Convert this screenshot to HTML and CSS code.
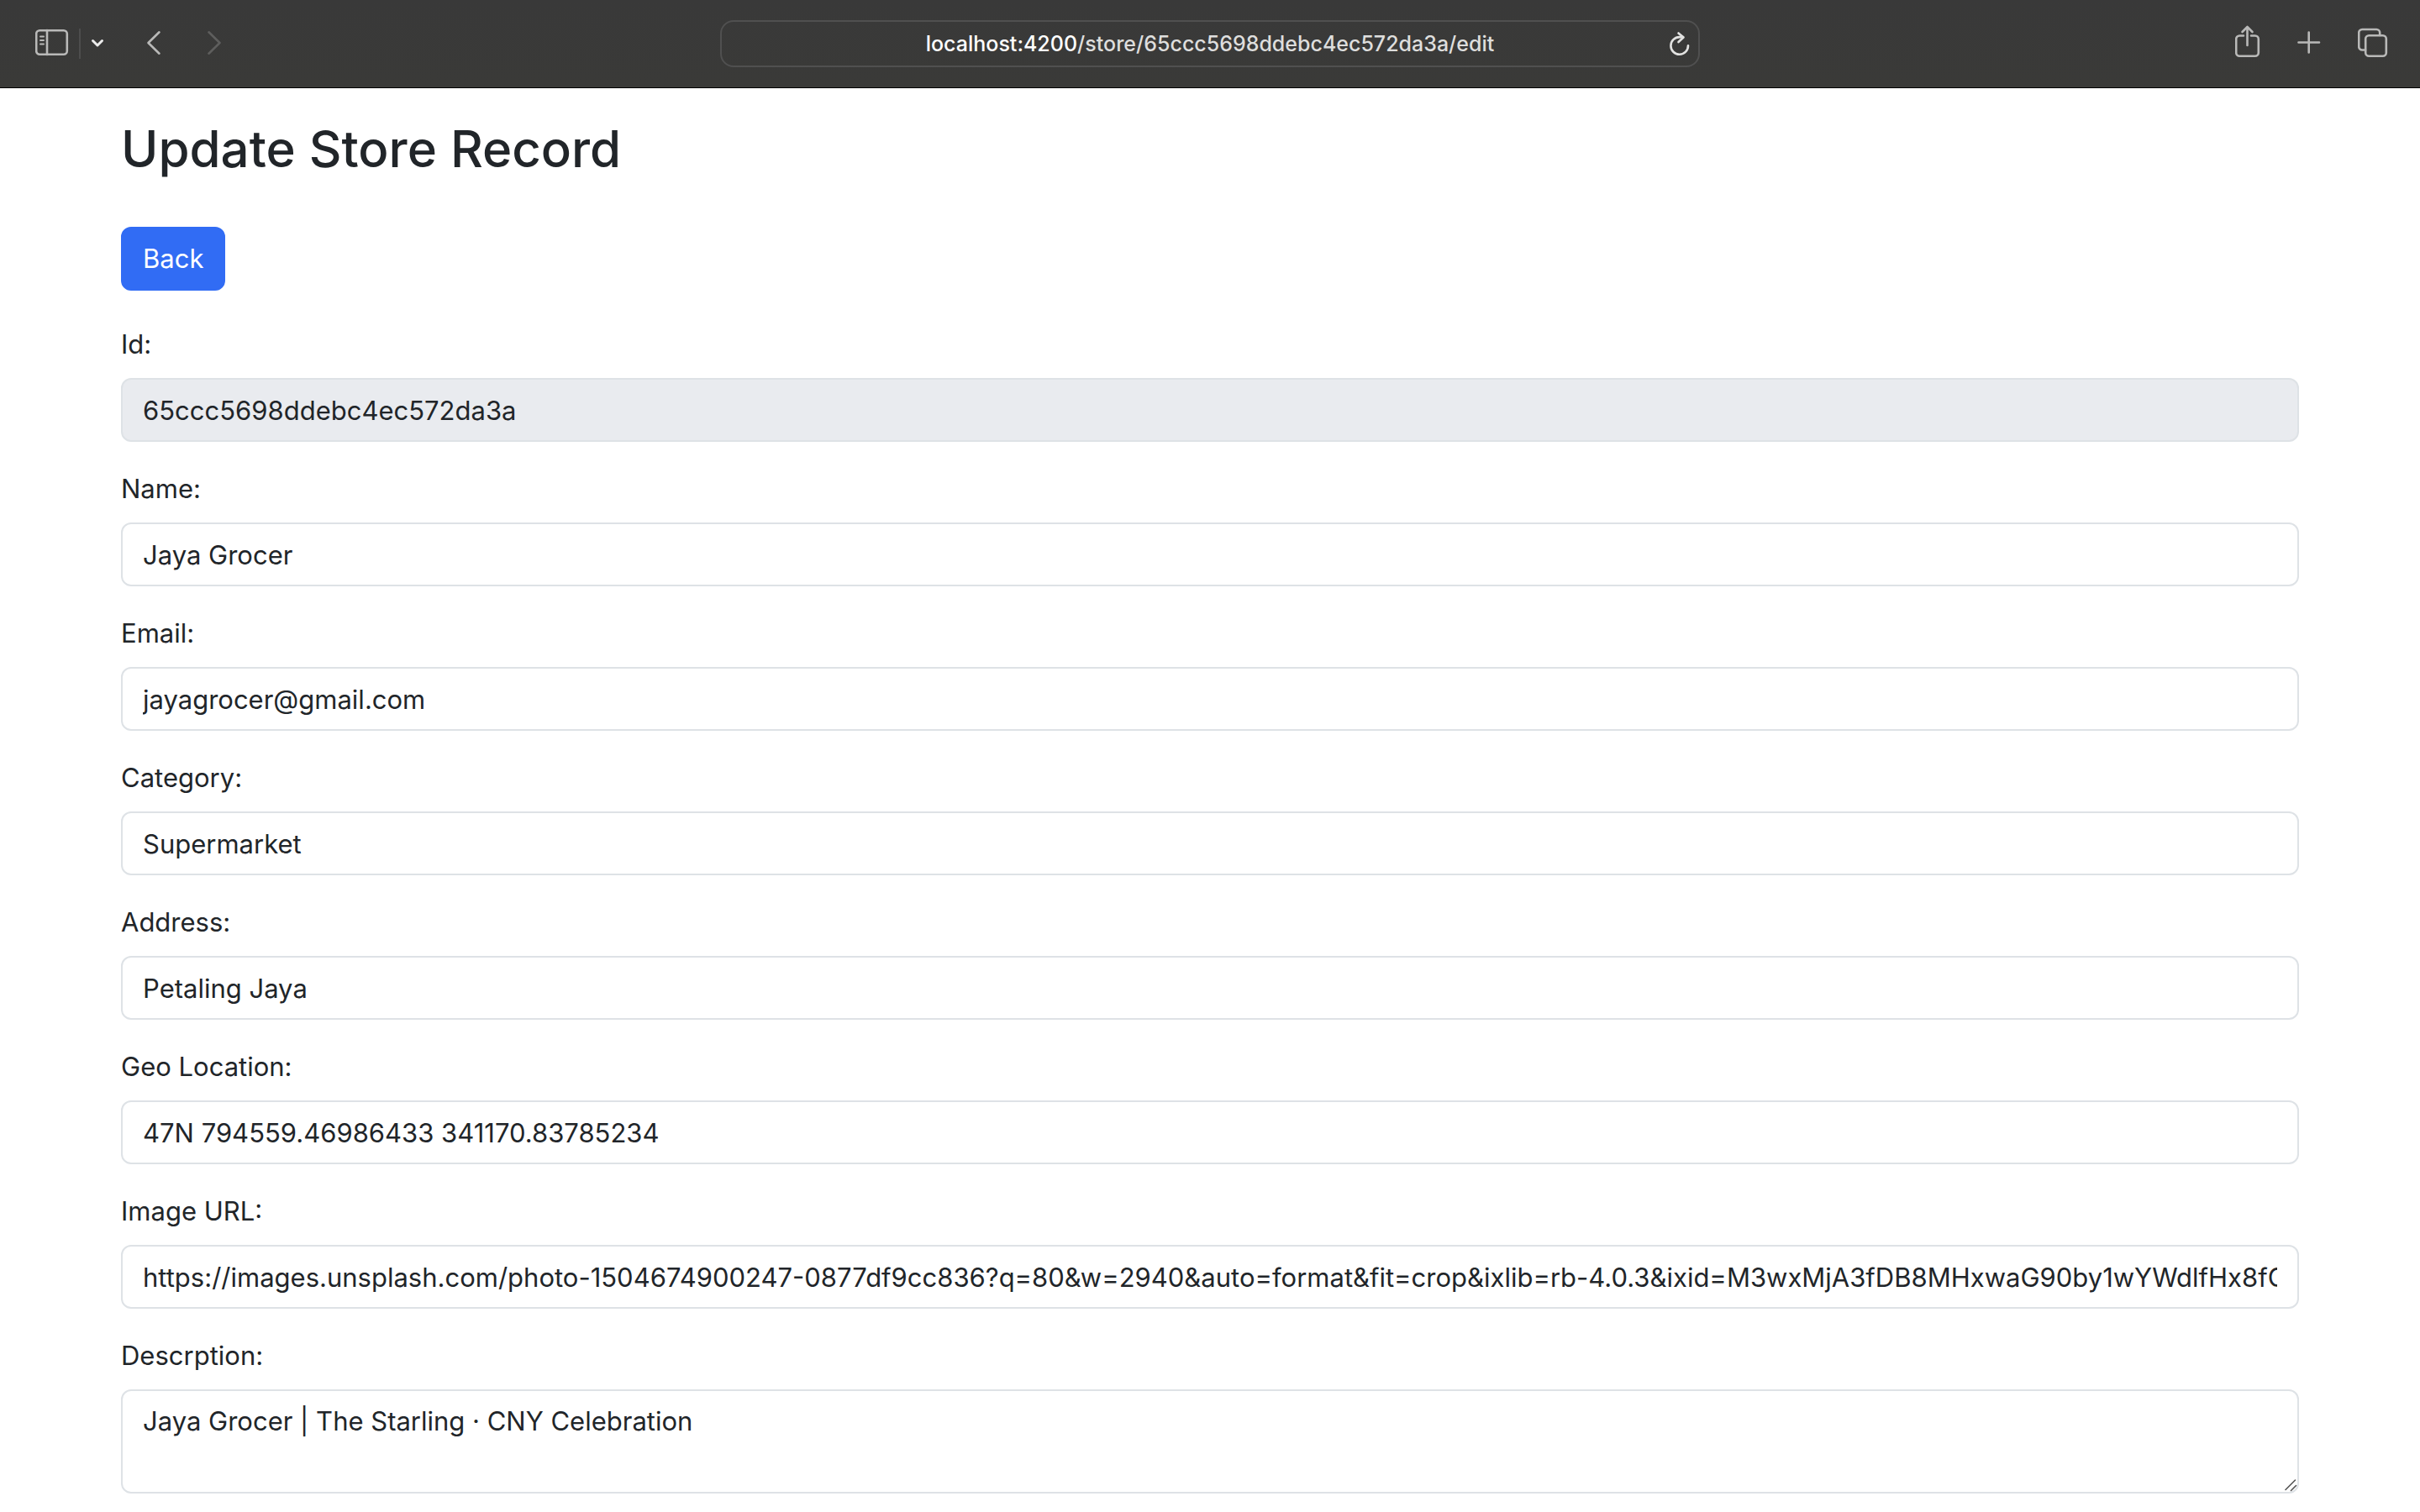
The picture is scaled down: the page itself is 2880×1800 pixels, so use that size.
FILE: index.html
```html
<!DOCTYPE html>
<html lang="en">
<head>
<meta charset="utf-8">
<title>Update Store Record</title>
<link rel="stylesheet" href="styles.css">
</head>
<body>
<header class="toolbar">
  <div class="tools tools-start">
    <div class="sidebar-tools">
      <button class="tool" type="button" aria-label="Show sidebar">
        <svg width="40" height="44" viewBox="0 0 40 44"><rect x="1.2" y="6.2" width="36.6" height="28.6" rx="4"/><path d="M14 6v29"/><path class="thin" d="M6 13.5h4M6 18h4M6 22.5h4"/></svg>
      </button>
      <span class="divider"></span>
      <button class="tool tool-bright" type="button" aria-label="Tab groups">
        <svg width="16" height="44" viewBox="0 0 16 44"><path d="M2.500 18.500L8 24l5.500-5.500"/></svg>
      </button>
    </div>
    <button class="tool" type="button" aria-label="Back">
      <svg width="20" height="44" viewBox="0 0 20 44"><path d="M15.500 8.300L2.500 21l13 12.700"/></svg>
    </button>
    <button class="tool tool-dim" type="button" aria-label="Forward">
      <svg width="20" height="44" viewBox="0 0 20 44"><path d="M4.500 8.300l13 12.700-13 12.700"/></svg>
    </button>
  </div>
  <div class="address">
    <button class="address-text" type="button"><span class="host">localhost:4200</span>/store/65ccc5698ddebc4ec572da3a/edit</button>
    <button class="tool reload" type="button" aria-label="Reload">
      <svg width="24" height="44" viewBox="0 0 24 44"><path d="M22 24.300a10.300 10.300 0 1 1-10.300-10.200h4.300"/><path d="M10.500 9.500l6 5-6 5.500"/></svg>
    </button>
  </div>
  <div class="tools tools-end">
    <button class="tool" type="button" aria-label="Share">
      <svg width="30" height="44" viewBox="0 0 30 44"><path d="M10 12.500H5.200a4 4 0 0 0-4 4v16.300a4 4 0 0 0 4 4h18.600a4 4 0 0 0 4-4V16.500a4 4 0 0 0-4-4H19"/><path d="M14.500 24V2.500M8.500 8l6-6 6 6"/></svg>
    </button>
    <button class="tool" type="button" aria-label="New tab">
      <svg width="28" height="44" viewBox="0 0 28 44"><path d="M1.500 20.500h24.500M13.700 8.500v24"/></svg>
    </button>
    <button class="tool" type="button" aria-label="Tab overview">
      <svg width="36" height="44" viewBox="0 0 36 44"><rect x="9.200" y="12.200" width="24.600" height="24.600" rx="4"/><path d="M9 29.500H5.200a4 4 0 0 1-4-4V9a4 4 0 0 1 4-4h17a4 4 0 0 1 4 4v3"/></svg>
    </button>
  </div>
</header>
<main class="container">
  <h1 class="title">Update Store Record</h1>
  <button class="btn" type="button">Back</button>
  <form class="form">
    <div class="field"><label for="id">Id:</label><input class="control" id="id" type="text" value="65ccc5698ddebc4ec572da3a" readonly></div>
    <div class="field"><label for="name">Name:</label><input class="control" id="name" type="text" value="Jaya Grocer"></div>
    <div class="field"><label for="email">Email:</label><input class="control" id="email" type="email" value="jayagrocer@gmail.com"></div>
    <div class="field"><label for="category">Category:</label><input class="control" id="category" type="text" value="Supermarket"></div>
    <div class="field"><label for="address">Address:</label><input class="control" id="address" type="text" value="Petaling Jaya"></div>
    <div class="field"><label for="geo">Geo Location:</label><input class="control" id="geo" type="text" value="47N 794559.46986433 341170.83785234"></div>
    <div class="field"><label for="image">Image URL:</label><input class="control" id="image" type="text" value="https://images.unsplash.com/photo-1504674900247-0877df9cc836?q=80&amp;w=2940&amp;auto=format&amp;fit=crop&amp;ixlib=rb-4.0.3&amp;ixid=M3wxMjA3fDB8MHxwaG90by1wYWdlfHx8fGVufDB8fHx8"></div>
    <div class="field"><label for="description">Descrption:</label><textarea class="control" id="description" rows="2">Jaya Grocer | The Starling · CNY Celebration</textarea></div>
  </form>
</main>
</body>
</html>
```
FILE: styles.css
```css
*, *::before, *::after { box-sizing: border-box; }

body {
  margin: 0;
  background: #fff;
  color: #212529;
  font-family: Inter, "Liberation Sans", sans-serif;
  font-size: 31px;
  line-height: 48px;
}

button, input, textarea { font: inherit; color: inherit; margin: 0; }

/* Browser toolbar */
.toolbar {
  display: grid;
  grid-template-columns: 1fr minmax(0, 1166px) 1fr;
  align-items: center;
  padding: 24px 38px;
  background: linear-gradient(#393939, #3a3a38);
  border-bottom: 1px solid #000;
}

.tools, .sidebar-tools { display: flex; align-items: center; }
.tools-start { gap: 50px; padding-left: 4px; }
.tools-end { gap: 44px; justify-content: flex-end; }
.sidebar-tools { gap: 12px; }
.divider { width: 2px; height: 36px; background: #4d4d4d; }

.tool { display: flex; padding: 0; border: 0; background: none; color: #b9b9b8; }
.tool-bright { color: #ececec; }
.tool-dim { color: #5e5e5d; }
.tool svg {
  fill: none;
  stroke: currentColor;
  stroke-width: 2.6;
  stroke-linecap: round;
  stroke-linejoin: round;
}
.tool-bright svg { stroke-width: 3; }
.tool .thin { stroke-width: 2; }

.address {
  display: flex;
  align-items: center;
  height: 56px;
  padding: 0 10px 0 34px;
  border: 2px solid #505050;
  border-radius: 16px;
}
.address-text {
  flex: 1;
  min-width: 0;
  padding: 0;
  border: 0;
  background: none;
  color: #dededd;
  font-size: 25px;
  font-weight: 500;
  line-height: 32px;
}
.host { color: #fff; }
.reload { color: #e2e2e1; }

/* Page */
.container {
  max-width: 2640px;
  margin: 0 auto;
  padding: 34px 24px 22px;
}

.title {
  margin: 0 0 55px;
  font-size: 60px;
  font-weight: 500;
  line-height: 76px;
}

.btn {
  display: block;
  padding: 12px 24px;
  border: 2px solid #316cf4;
  border-radius: 12px;
  background: #316cf4;
  color: #fff;
}

.form { display: grid; gap: 32px; margin-top: 40px; }
.field { display: grid; gap: 16px; }

.control {
  display: block;
  width: 100%;
  padding: 12px 24px;
  border: 2px solid #dee2e6;
  border-radius: 12px;
  background: #fff;
  outline: 0;
}
input.control { height: 76px; }
.control:read-only { background: #e9ebef; }
textarea.control { resize: vertical; }
textarea.control::-webkit-resizer {
  background: url("data:image/svg+xml,%3Csvg xmlns='http://www.w3.org/2000/svg' width='15' height='15' fill='none' stroke='%23555' stroke-width='1.6' stroke-linecap='round'%3E%3Cpath d='M1 12.500L12.500 1M7.500 13.500l6-6'/%3E%3C/svg%3E") no-repeat right bottom;
}
```
